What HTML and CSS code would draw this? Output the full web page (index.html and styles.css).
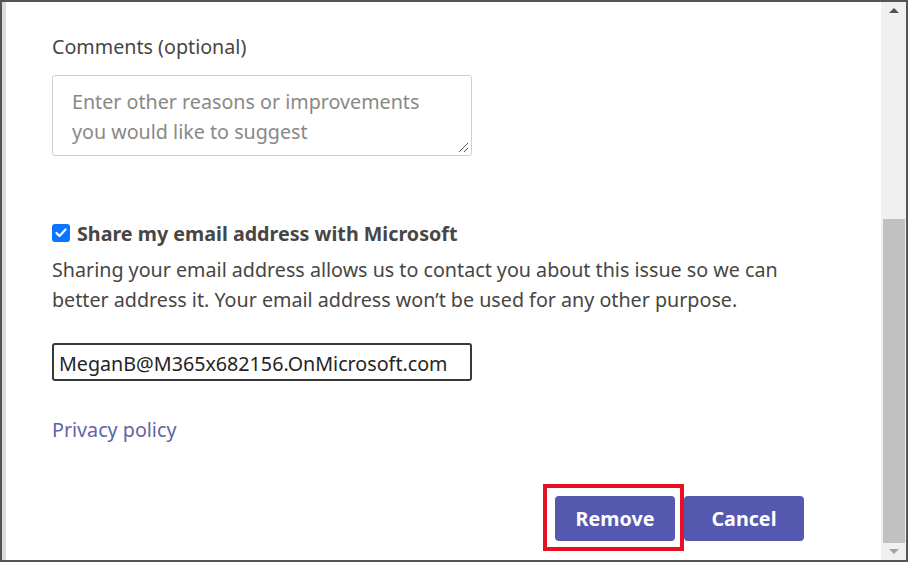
FILE: index.html
```html
<!DOCTYPE html>
<html>
<head>
<meta charset="utf-8">
<link rel="stylesheet" href="styles.css">
</head>
<body>
<div class="frame">
  <div class="backstrip"></div>
  <div class="panel">
    <div class="field-label">Comments (optional)</div>
    <div class="textarea">
      <div class="placeholder">Enter other reasons or improvements<br>you would like to suggest</div>
      <svg class="grip" width="11" height="11" viewBox="0 0 11 11"><path d="M10 1 L1 10 M10 6 L6 10" stroke="#555" stroke-width="1" fill="none"/></svg>
    </div>
    <div class="share">
      <span class="check"><svg width="12" height="10" viewBox="0 0 12 10"><path d="M1.5 5 L4.5 8 L10.5 1.5" stroke="#fff" stroke-width="2.2" fill="none" stroke-linecap="round" stroke-linejoin="round"/></svg></span>
      <span class="share-label">Share my email address with Microsoft</span>
    </div>
    <p class="desc">Sharing your email address allows us to contact you about this issue so we can better address it. Your email address won’t be used for any other purpose.</p>
    <div class="email">MeganB@M365x682156.OnMicrosoft.com</div>
    <a class="privacy">Privacy policy</a>
    <div class="actions">
      <div class="highlight"><button class="btn">Remove</button></div>
      <button class="btn">Cancel</button>
    </div>
  </div>
  <div class="scrollbar">
    <div class="arrow up"></div>
    <div class="track"><div class="thumb"></div></div>
    <div class="arrow down"></div>
  </div>
</div>
</body>
</html>
```

FILE: styles.css
```css
html, body {
  margin: 0;
  padding: 0;
  background: #fff;
}
body {
  width: 909px;
  height: 563px;
  overflow: hidden;
  font-family: "Noto Sans", "Open Sans", sans-serif;
  color: #484644;
}
.frame {
  box-sizing: border-box;
  width: 908px;
  height: 562px;
  border: 2px solid #555;
  display: flex;
}
.backstrip {
  width: 4px;
  background: #dcdcdc;
  flex: none;
}
.panel {
  flex: 1;
  padding: 33px 0 0 46px;
  background: #fff;
}
.field-label {
  font-size: 19.7px;
  line-height: 24px;
  color: #484644;
}
.textarea {
  position: relative;
  box-sizing: border-box;
  width: 420px;
  height: 81px;
  margin-top: 16px;
  border: 1px solid #cfcfcf;
  border-radius: 3px;
  padding: 11px 0 0 19px;
}
.placeholder {
  font-size: 19.7px;
  line-height: 30px;
  color: #8a8886;
  white-space: nowrap;
}
.grip {
  position: absolute;
  right: 2px;
  bottom: 2px;
}
.share {
  display: flex;
  align-items: center;
  margin-top: 67px;
  height: 20px;
}
.check {
  width: 18px;
  height: 18px;
  border-radius: 3px;
  background: #0a75ff;
  display: flex;
  align-items: center;
  justify-content: center;
  margin-right: 7px;
}
.share-label {
  font-size: 19.7px;
  font-weight: 700;
  color: #484644;
}
.desc {
  margin: 12px 0 0 0;
  width: 740px;
  font-size: 19.7px;
  line-height: 30px;
  color: #484644;
}
.email {
  box-sizing: border-box;
  width: 420px;
  height: 38px;
  margin-top: 28px;
  border: 2px solid #3a3a3a;
  border-radius: 3px;
  padding: 1px 0 0 5px;
  font-size: 19.7px;
  line-height: 35px;
  color: #252423;
  white-space: nowrap;
}
.privacy {
  display: block;
  margin-top: 36px;
  font-size: 19.7px;
  line-height: 26px;
  color: #6264a7;
}
.actions {
  display: flex;
  align-items: center;
  margin-top: 41px;
  margin-left: 491px;
}
.highlight {
  border: 4px solid #e81123;
  padding: 8px 5px 6px 8px;
}
.btn {
  width: 120px;
  height: 45px;
  border: none;
  border-radius: 4px;
  background: #5558af;
  color: #fff;
  font-family: "Noto Sans", "Open Sans", sans-serif;
  font-size: 19.7px;
  font-weight: 700;
  padding: 0;
}
.actions > .btn {
  margin-top: 2px;
}
.scrollbar {
  width: 25px;
  flex: none;
  background: #f0f0f0;
  display: flex;
  flex-direction: column;
}
.arrow {
  height: 17px;
  display: flex;
  align-items: center;
  justify-content: center;
  flex: none;
}
.arrow.up::before {
  content: "";
  border-left: 5px solid transparent;
  border-right: 5px solid transparent;
  border-bottom: 5px solid #505050;
}
.arrow.down::before {
  content: "";
  border-left: 5px solid transparent;
  border-right: 5px solid transparent;
  border-top: 5px solid #a3a3a3;
}
.track {
  flex: 1;
  display: flex;
  flex-direction: column;
  justify-content: flex-end;
  padding: 0 1px 0 2px;
}
.thumb {
  height: 324px;
  background: #c1c1c1;
}
```
